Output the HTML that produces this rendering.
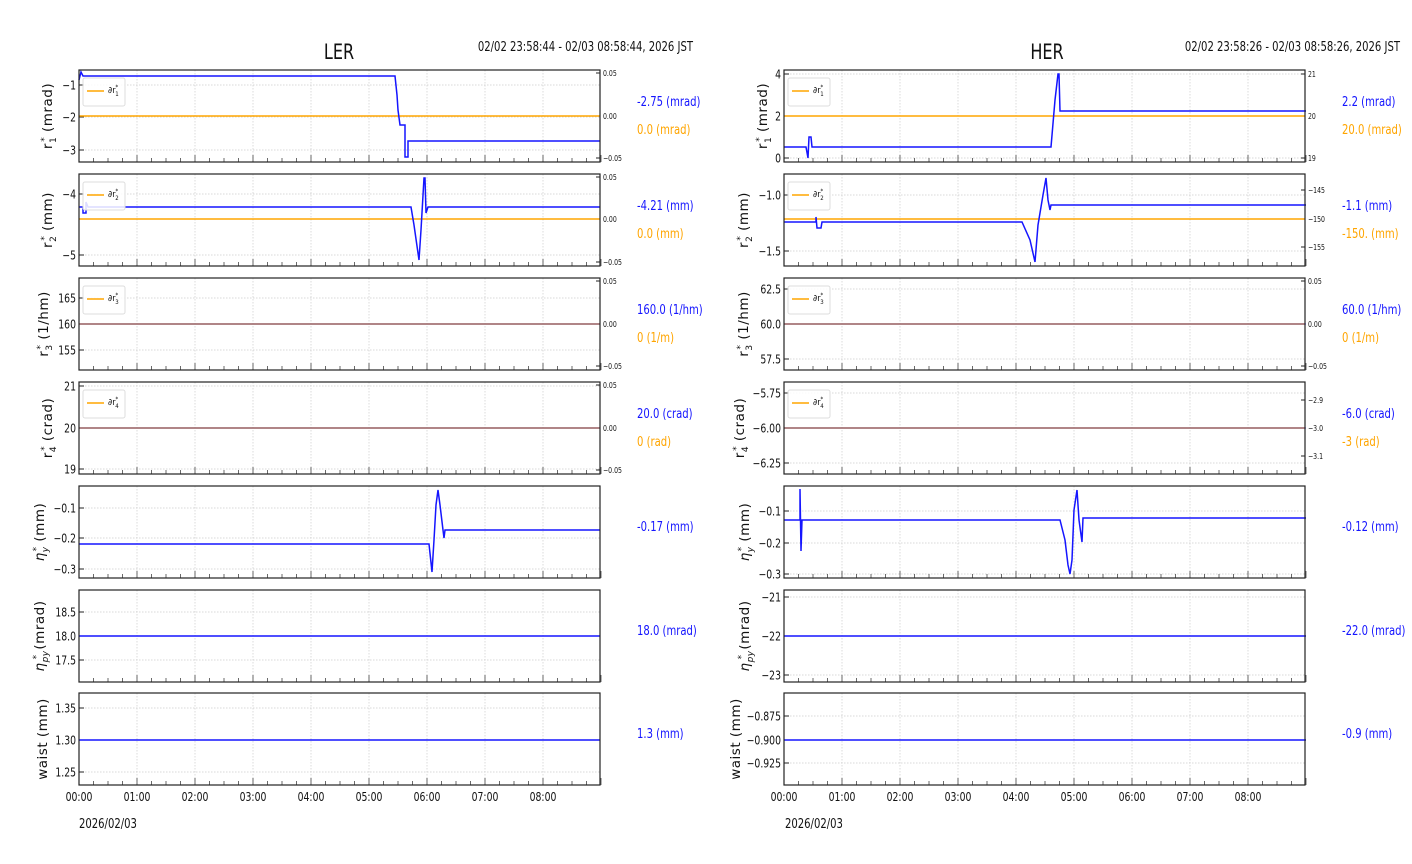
<!DOCTYPE html>
<html><head><meta charset="utf-8"><style>
html,body{margin:0;padding:0;background:#fff;width:1412px;height:864px;overflow:hidden}
svg{display:block}
text{font-family:"DejaVu Sans Condensed","Liberation Sans Narrow","Liberation Sans",sans-serif;fill:#111}
text.yl{font-family:"DejaVu Sans",sans-serif}
</style></head><body>
<svg id="s" width="1412" height="864" xmlns="http://www.w3.org/2000/svg"></svg>
<script>
var S=document.getElementById('s'),h='';
var B='#1515ff',O='#ffa500';
function T(x,y,fs,a,s,col,sx){sx=sx||0.86;return '<g transform="translate('+x+','+y+') scale('+sx+',1)"><text font-size="'+fs+'" text-anchor="'+(a||'start')+'"'+(col?' style="fill:'+col+'"':'')+'>'+s+'</text></g>';}
h+=T(339,59,21,'middle','LER',0,0.85)+T(1047,59,21,'middle','HER',0,0.85);
h+=T(693,51,13,'end','02/02 23:58:44 - 02/03 08:58:44, 2026 JST')+T(1400,51,13,'end','02/02 23:58:26 - 02/03 08:58:26, 2026 JST');
h+=T(79,828,13,0,'2026/02/03')+T(785,828,13,0,'2026/02/03');
function P(x0,i,c){
 var y0=70+104*i-(i==6?1:0),W=521,H=92;
 for(var k=1;k<9;k++){var x=x0+58*k;h+='<line x1="'+x+'" y1="'+y0+'" x2="'+x+'" y2="'+(y0+H)+'" stroke="#ccc" stroke-width="0.7" stroke-dasharray="1.5,1.5"/>';}
 c.yt.forEach(function(t){h+='<line x1="'+x0+'" y1="'+t[1]+'" x2="'+(x0+W)+'" y2="'+t[1]+'" stroke="#ccc" stroke-width="0.7" stroke-dasharray="1.5,1.5"/>';
  h+='<line x1="'+x0+'" y1="'+t[1]+'" x2="'+(x0+5)+'" y2="'+t[1]+'" stroke="#222"/>';
  h+=T(x0-3,t[1]+4.5,12,'end',t[0]);});
 for(var k=0;k<=36;k++){var x=x0+14.5*k,L=k%4?4:7;h+='<line x1="'+x+'" y1="'+(y0+H)+'" x2="'+x+'" y2="'+(y0+H-L)+'" stroke="#444" stroke-width="0.8"/>';}
 if(c.rt)c.rt.forEach(function(t){h+='<line x1="'+(x0+W)+'" y1="'+t[1]+'" x2="'+(x0+W-4)+'" y2="'+t[1]+'" stroke="#222"/>'+T(x0+W+3,t[1]+3,8,0,t[0]);});
 if(c.o!=null)h+='<line x1="'+x0+'" y1="'+c.o+'" x2="'+(x0+W)+'" y2="'+c.o+'" stroke="'+O+'" stroke-width="1.5"/>';
 if(c.b)h+='<polyline points="'+c.b+'" fill="none" stroke="'+B+'" stroke-width="1.5" opacity="'+(c.o!=null&&c.b.split(' ').length<3?0.45:1)+'"/>';
 if(c.lg){h+='<rect x="'+(x0+4)+'" y="'+(y0+8)+'" width="42" height="28" rx="2" fill="#fff" fill-opacity="0.85" stroke="#ddd"/><line x1="'+(x0+8)+'" y1="'+(y0+21)+'" x2="'+(x0+25)+'" y2="'+(y0+21)+'" stroke="'+O+'" stroke-width="1.5"/><text x="'+(x0+29)+'" y="'+(y0+23)+'" font-size="9">∂r<tspan font-size="6" dy="-4">*</tspan><tspan font-size="6" dx="-3" dy="7">'+c.lg+'</tspan></text>';}
 h+='<rect x="'+x0+'" y="'+y0+'" width="'+W+'" height="'+H+'" fill="none" stroke="#222" stroke-width="1.2"/>';
 var yc=y0+H/2;
 h+='<text class="yl" transform="translate('+c.yx+','+yc+') rotate(-90)" font-size="13.5" text-anchor="middle" letter-spacing="0.5">'+c.yl+'</text>';
 var lx=x0+558;
 if(c.l2){h+=T(lx,y0+36,13,0,c.l1,B)+T(lx,y0+64,13,0,c.l2,O);}
 else h+=T(lx,y0+45,13,0,c.l1,B);
}
function r(n,u){return 'r<tspan font-size="9" dy="4">'+n+'</tspan><tspan font-size="9" dx="-5" dy="-9">*</tspan><tspan dy="5"> ('+u+')</tspan>';}
function e(s,u){return '<tspan font-style="italic">η</tspan><tspan font-size="9" dy="4" font-style="italic">'+s+'</tspan><tspan font-size="9" dx="'+(s.length>1?-9:-5)+'" dy="-9">*</tspan><tspan dy="5"> ('+u+')</tspan>';}
var L=79,R=784;
P(L,0,{yx:52,yt:[['\u22121',85],['\u22122',117],['\u22123',150]],rt:[['0.05',73],['0.00',116],['\u22120.05',158]],o:116,lg:'1',yl:r(1,'mrad'),l1:'-2.75 (mrad)',l2:'0.0 (mrad)',
 b:'79,80 81,72 83,76 395,76 397,95 398,110 400,125 405,125 405,157 408,157 408,141 600,141'});
P(L,1,{yx:52,yt:[['\u22124',194],['\u22125',255]],rt:[['0.05',177],['0.00',219],['\u22120.05',262]],o:219,lg:'2',yl:r(2,'mm'),l1:'-4.21 (mm)',l2:'0.0 (mm)',
 b:'79,207 83,207 83,213 86,213 86,202 88,207 411,207 414,225 419,260 421,230 424,178 425,178 426,213 428,207 600,207'});
P(L,2,{yx:48,yt:[[165,298],[160,324],[155,350]],rt:[['0.05',281],['0.00',324],['\u22120.05',366]],o:324,lg:'3',yl:r(3,'1/hm'),l1:'160.0 (1/hm)',l2:'0 (1/m)',b:'79,324 600,324'});
P(L,3,{yx:52,yt:[[21,386],[20,428],[19,469]],rt:[['0.05',385],['0.00',428],['\u22120.05',470]],o:428,lg:'4',yl:r(4,'crad'),l1:'20.0 (crad)',l2:'0 (rad)',b:'79,428 600,428'});
P(L,4,{yx:44,yt:[['\u22120.1',508],['\u22120.2',538],['\u22120.3',569]],yl:e('y','mm'),l1:'-0.17 (mm)',
 b:'79,544 429,544 432,572 434,540 436,505 438,490 440,505 443,530 444,538 445,530 600,530'});
P(L,5,{yx:44,yt:[['18.5',612],['18.0',636],['17.5',660]],yl:e('py','mrad'),l1:'18.0 (mrad)',b:'79,636 600,636'});
P(L,6,{yx:47,yt:[['1.35',708],['1.30',740],['1.25',772]],yl:'waist (mm)',l1:'1.3 (mm)',b:'79,740 600,740'});
P(R,0,{yx:767,yt:[[4,74],[2,116],[0,158]],rt:[['21',74],['20',116],['19',158]],o:116,lg:'1',yl:r(1,'mrad'),l1:'2.2 (mrad)',l2:'20.0 (mrad)',
 b:'784,147 806,147 808,158 809,137 811,137 812,147 1051,147 1055,100 1058,74 1059,74 1060,111 1306,111'});
P(R,1,{yx:748,yt:[['\u22121.0',195],['\u22121.5',251]],rt:[['\u2212145',190],['\u2212150',219],['\u2212155',247]],o:219,lg:'2',yl:r(2,'mm'),l1:'-1.1 (mm)',l2:'-150. (mm)',
 b:'784,222 816,222 816,217 817,228 821,228 822,222 1022,222 1030,240 1035,262 1038,225 1043,195 1046,178 1048,200 1050,210 1051,205 1306,205'});
P(R,2,{yx:748,yt:[['62.5',289],['60.0',324],['57.5',359]],rt:[['0.05',281],['0.00',324],['\u22120.05',366]],o:324,lg:'3',yl:r(3,'1/hm'),l1:'60.0 (1/hm)',l2:'0 (1/m)',b:'784,324 1306,324'});
P(R,3,{yx:744,yt:[['\u22125.75',393],['\u22126.00',428],['\u22126.25',463]],rt:[['\u22122.9',400],['\u22123.0',428],['\u22123.1',456]],o:428,lg:'4',yl:r(4,'crad'),l1:'-6.0 (crad)',l2:'-3 (rad)',b:'784,428 1306,428'});
P(R,4,{yx:749,yt:[['\u22120.1',511],['\u22120.2',543],['\u22120.3',574]],yl:e('y','mm'),l1:'-0.12 (mm)',
 b:'784,520 800,520 800,489 801,551 802,520 1060,520 1065,540 1068,565 1070,574 1072,560 1074,510 1077,490 1079,520 1082,542 1083,518 1306,518'});
P(R,5,{yx:749,yt:[['\u221221',597],['\u221222',636],['\u221223',675]],yl:e('py','mrad'),l1:'-22.0 (mrad)',b:'784,636 1306,636'});
P(R,6,{yx:740,yt:[['\u22120.875',716],['\u22120.900',740],['\u22120.925',763]],yl:'waist (mm)',l1:'-0.9 (mm)',b:'784,740 1306,740'});
[L,R].forEach(function(x0){for(var k=0;k<9;k++)h+=T(x0+58*k,801,12,'middle','0'+k+':00');});
S.insertAdjacentHTML('beforeend',h);
</script>
</body></html>
